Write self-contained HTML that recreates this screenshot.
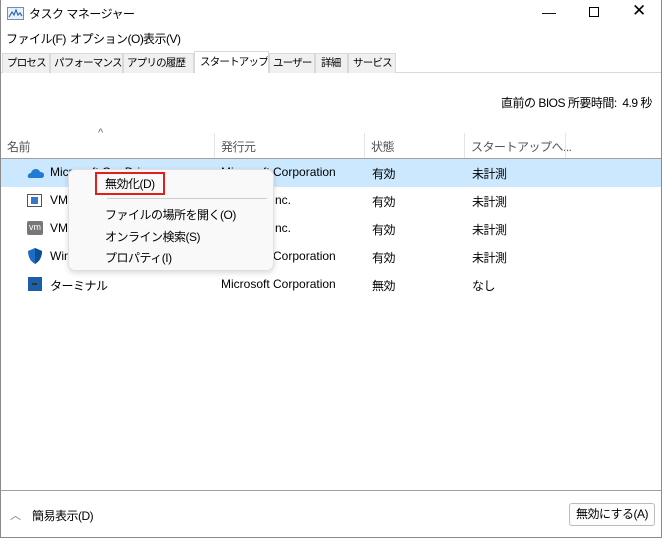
<!DOCTYPE html>
<html><head><meta charset="utf-8"><style>
*{margin:0;padding:0;box-sizing:border-box}
body{width:662px;height:538px;overflow:hidden;background:#fff;font-family:"Liberation Sans","Noto Sans CJK JP",sans-serif;font-size:12px;color:#000;position:relative}
.a{position:absolute;white-space:nowrap}
.j{letter-spacing:-0.5px}
.tab{position:absolute;top:53px;height:20px;background:#f0f0f0;border:1px solid #d9d9d9;border-bottom:none;font-size:10.5px;letter-spacing:-0.8px;line-height:18px;padding-left:3px;white-space:nowrap;overflow:hidden}
.vl{position:absolute;top:133px;width:1px;height:25px;background:#e5e5e5}
.row{position:absolute;left:1px;width:660px;height:28px}
.mi{position:absolute;left:36px;font-size:12px;letter-spacing:-0.5px;white-space:nowrap}
</style></head><body>
<div class="a" style="left:0;top:0;width:662px;height:538px;border:1px solid #8a8a8a;border-top:none"></div>
<svg class="a" style="left:7px;top:7px" width="17" height="13"><rect x=".5" y=".5" width="16" height="12" fill="#e8f0fa" stroke="#6d8fb8"/><path d="M2 10 L5 5 L7 8 L9 3 L11 8 L13 6 L15 9" fill="none" stroke="#2a6db5" stroke-width="1.2"/></svg>
<div class="a j" style="left:29px;top:5px">タスク マネージャー</div>
<div class="a" style="left:542px;top:4px;font-size:14px">—</div>
<div class="a" style="left:589px;top:7px;width:10px;height:10px;border:1px solid #000"></div>
<div class="a" style="left:632px;top:1px;font-size:17px">✕</div>
<div class="a j" style="left:6px;top:30px">ファイル(F)</div>
<div class="a j" style="left:70px;top:30px">オプション(O)</div>
<div class="a j" style="left:143px;top:30px">表示(V)</div>
<div class="a" style="left:1px;top:72px;width:660px;height:1px;background:#d9d9d9"></div>
<div class="tab" style="left:2px;width:48px;padding-left:4px">プロセス</div>
<div class="tab" style="left:50px;width:73px">パフォーマンス</div>
<div class="tab" style="left:123px;width:71px">アプリの履歴</div>
<div class="tab" style="left:194px;top:51px;height:22px;width:75px;background:#fff;line-height:20px;padding-left:5px">スタートアップ</div>
<div class="tab" style="left:269px;width:46px">ユーザー</div>
<div class="tab" style="left:315px;width:33px;padding-left:5px">詳細</div>
<div class="tab" style="left:348px;width:48px;padding-left:4px">サービス</div>
<div class="a j" style="left:501px;top:94px">直前の BIOS 所要時間:&nbsp; 4.9 秒</div>
<div class="a" style="left:98px;top:127px;font-size:11px;color:#666">^</div>
<div class="a j" style="left:7px;top:138px;color:#555">名前</div>
<div class="a j" style="left:221px;top:138px;color:#555">発行元</div>
<div class="a j" style="left:371px;top:138px;color:#555">状態</div>
<div class="a j" style="left:471px;top:138px;color:#555">スタートアップへ...</div>
<div class="vl" style="left:214px"></div><div class="vl" style="left:364px"></div><div class="vl" style="left:464px"></div><div class="vl" style="left:565px"></div>
<div class="a" style="left:1px;top:158px;width:660px;height:1px;background:#a0a0a0"></div>
<div class="row" style="top:159px;background:#cce8ff"></div>
<svg class="a" style="left:27px;top:167px" width="18" height="12"><path d="M3 11 Q0 11 1 8 Q2 6 4 6 Q5 2 9 2 Q12 2 13 5 Q17 5 17 8 Q17 11 14 11Z" fill="#1f7bd6"/></svg>
<div class="a" style="left:50px;top:165px">Microsoft OneDrive</div>
<div class="a" style="left:221px;top:165px">Microsoft Corporation</div>
<div class="a j" style="left:372px;top:165px">有効</div><div class="a j" style="left:472px;top:165px">未計測</div>
<div class="a" style="left:27px;top:194px;width:15px;height:13px;border:1px solid #555;background:#fff"><div style="margin:2px 3px;height:7px;background:#3a76c6"></div></div>
<div class="a" style="left:50px;top:193px">VMware Tools Core Service</div>
<div class="a" style="left:221px;top:193px">VMware, Inc.</div>
<div class="a j" style="left:372px;top:193px">有効</div><div class="a j" style="left:472px;top:193px">未計測</div>
<div class="a" style="left:27px;top:221px;width:16px;height:14px;background:#777;color:#fff;font-size:9px;line-height:13px;text-align:center;border-radius:2px">vm</div>
<div class="a" style="left:50px;top:221px">VMware Tools</div>
<div class="a" style="left:221px;top:221px">VMware, Inc.</div>
<div class="a j" style="left:372px;top:221px">有効</div><div class="a j" style="left:472px;top:221px">未計測</div>
<svg class="a" style="left:28px;top:248px" width="14" height="16"><path d="M7 0 L14 3 Q14 12 7 16 Q0 12 0 3Z" fill="#1a6fc4"/><path d="M7 0 L14 3 Q14 12 7 16Z" fill="#0d4f96"/></svg>
<div class="a" style="left:50px;top:249px">Windows Security notification icon</div>
<div class="a" style="left:221px;top:249px">Microsoft Corporation</div>
<div class="a j" style="left:372px;top:249px">有効</div><div class="a j" style="left:472px;top:249px">未計測</div>
<div class="a" style="left:28px;top:277px;width:14px;height:14px;background:#1b5fa8"><div style="margin:6px 4px;width:5px;height:2px;background:#333"></div></div>
<div class="a j" style="left:50px;top:277px">ターミナル</div>
<div class="a" style="left:221px;top:277px">Microsoft Corporation</div>
<div class="a j" style="left:372px;top:277px">無効</div><div class="a j" style="left:472px;top:277px">なし</div>
<div class="a" style="left:68px;top:169px;width:206px;height:102px;background:#f9f9f9;border:1px solid #e0e0e0;border-radius:7px;box-shadow:0 2px 6px rgba(0,0,0,.15)">
<div class="a" style="left:26px;top:2px;width:70px;height:23px;border:2px solid #e0201e"></div>
<div class="mi" style="top:5px">無効化(D)</div>
<div class="a" style="left:38px;top:28px;width:160px;height:1px;background:#ccc"></div>
<div class="mi" style="top:36px">ファイルの場所を開く(O)</div>
<div class="mi" style="top:58px">オンライン検索(S)</div>
<div class="mi" style="top:79px">プロパティ(I)</div>
</div>
<div class="a" style="left:1px;top:490px;width:660px;height:1px;background:#a0a0a0"></div>
<div class="a" style="left:10px;top:507px;font-size:11px;color:#777">︿</div>
<div class="a j" style="left:32px;top:507px">簡易表示(D)</div>
<div class="a j" style="left:569px;top:503px;width:86px;height:23px;border:1px solid #bbb;border-radius:3px;background:#fdfdfd;text-align:center;line-height:21px">無効にする(A)</div>
</body></html>
